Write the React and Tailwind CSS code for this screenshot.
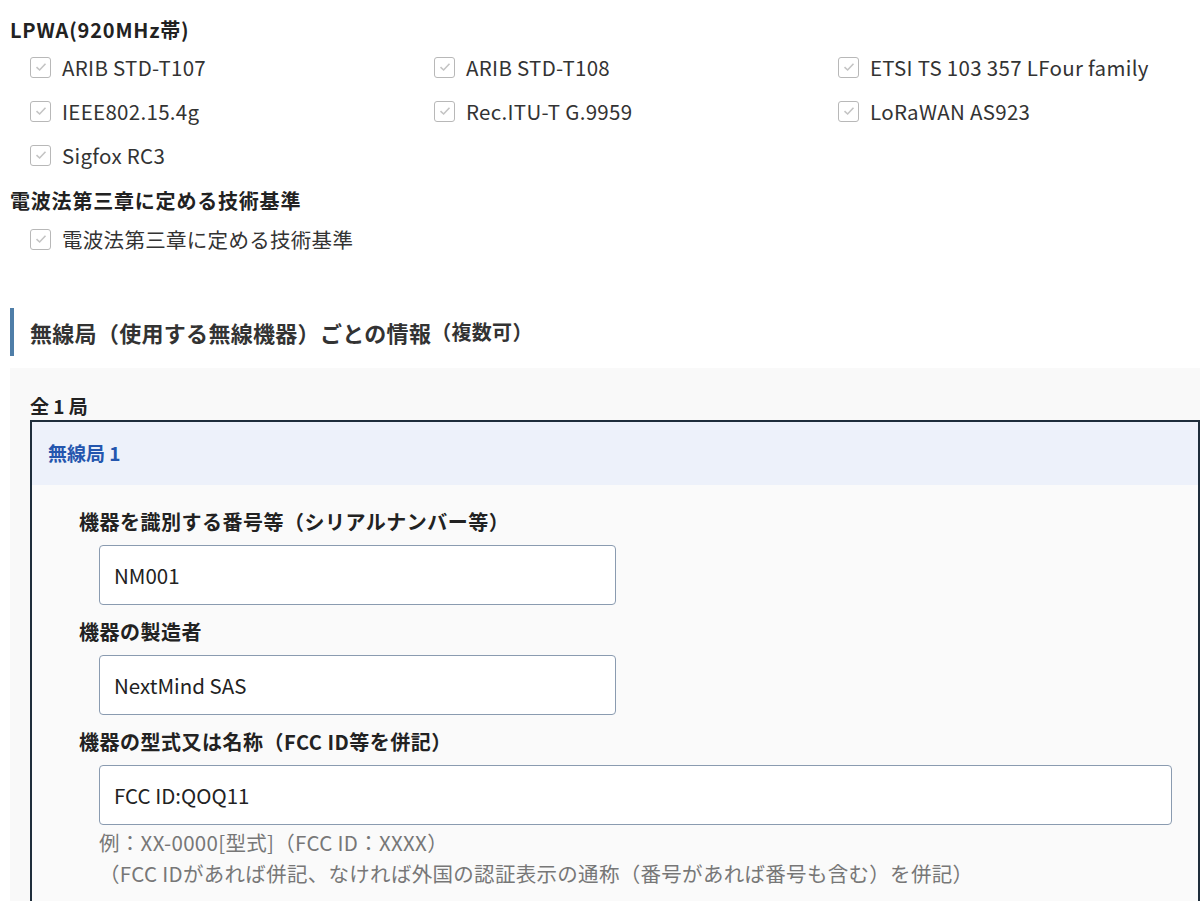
const F = { fontFamily: '"Noto Sans CJK JP", "Noto Sans", sans-serif' };

function Check({ label }) {
  return (
    <div className="flex items-center h-[44px]">
      <div className="w-[21px] h-[21px] border border-[#b8b8b8] rounded-[3px] bg-white flex items-center justify-center">
        <svg width="14" height="14" viewBox="0 0 14 14"><path d="M2.5 7.2 L5.6 10 L11.5 3.8" fill="none" stroke="#c4c4c4" strokeWidth="1.6" /></svg>
      </div>
      <span className="ml-[11px] text-[20.5px] tracking-[0.3px] text-[#333]">{label}</span>
    </div>
  );
}

function Field({ label, value, wide }) {
  return (
    <div className="pl-[47px]">
      <div className="text-[20px] tracking-[0.5px] font-bold text-[#222] h-[30px] flex items-center">{label}</div>
      <div className={`ml-[20px] mt-[8px] h-[60px] bg-white border border-[#8a9bb0] rounded-[4px] flex items-center px-[14px] text-[20.5px] text-[#222] ${wide ? 'mr-[26px]' : 'w-[517px]'}`}>{value}</div>
    </div>
  );
}

export default function App() {
  return (
    <div style={F} className="w-[1200px] h-[901px] overflow-hidden bg-white">
      <div className="pl-[10px] pt-[15px]">
        <div className="text-[20px] tracking-[0.8px] font-bold text-[#222] h-[30px] flex items-center">LPWA(920MHz帯)</div>
        <div className="pl-[20px] grid grid-cols-[404px_404px_404px]">
          <Check label="ARIB STD-T107" />
          <Check label="ARIB STD-T108" />
          <Check label="ETSI TS 103 357 LFour family" />
          <Check label="IEEE802.15.4g" />
          <Check label="Rec.ITU-T G.9959" />
          <Check label="LoRaWAN AS923" />
          <Check label="Sigfox RC3" />
        </div>
        <div className="mt-[8px] text-[20px] tracking-[0.8px] font-bold text-[#222] h-[32px] flex items-center">電波法第三章に定める技術基準</div>
        <div className="pl-[20px]">
          <Check label="電波法第三章に定める技術基準" />
        </div>
      </div>
      <div className="ml-[10px] mt-[47px] border-l-[4px] border-[#4f7ea8] h-[48px] flex items-center pl-[16px] text-[22px] tracking-[0.3px] font-bold text-[#333]">
        無線局（使用する無線機器）ごとの情報<span className="text-[20px]">（複数可）</span>
      </div>
      <div className="ml-[10px] mt-[12px] bg-[#f9f9f9] pt-[24px] h-[600px]">
        <div className="pl-[20px] text-[19px] font-bold text-[#222] h-[28px] flex items-center">全 1 局</div>
        <div className="ml-[20px] border-2 border-[#1e2d3b] h-[600px]">
          <div className="bg-[#edf1fa] h-[63px] flex items-center pl-[16px] text-[19px] font-bold text-[#2456ae]">無線局 1</div>
          <div className="pt-[22px] flex flex-col gap-[12px] bg-[#fafafa] h-full">
            <Field label="機器を識別する番号等（シリアルナンバー等）" value="NM001" />
            <Field label="機器の製造者" value="NextMind SAS" />
            <Field label="機器の型式又は名称（FCC ID等を併記）" value="FCC ID:QOQ11" wide />
            <div className="pl-[67px] -mt-[10px] text-[20.5px] tracking-[0.3px] text-[#777] leading-[31px]">
              <div>例：XX-0000[型式]（FCC ID：XXXX）</div>
              <div>（FCC IDがあれば併記、なければ外国の認証表示の通称（番号があれば番号も含む）を併記）</div>
            </div>
          </div>
        </div>
      </div>
    </div>
  );
}
